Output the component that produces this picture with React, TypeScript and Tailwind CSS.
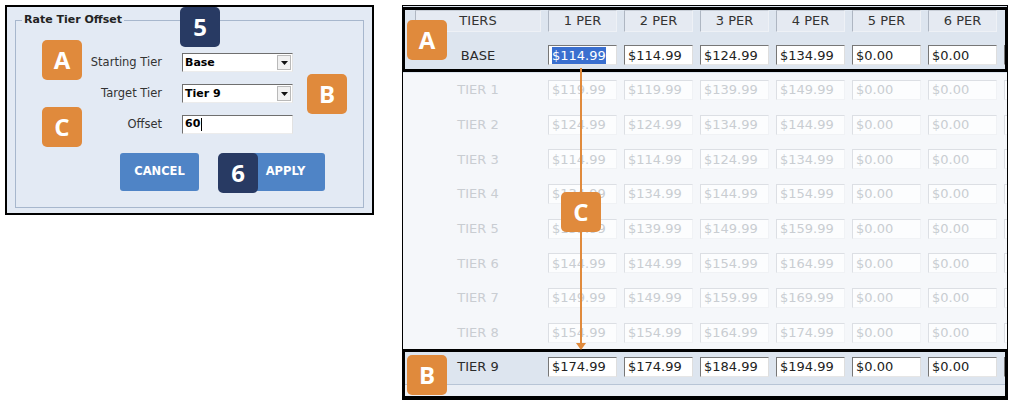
import React from "react";

const tiers = [
  { label: "BASE", vals: ["$114.99", "$114.99", "$124.99", "$134.99", "$0.00", "$0.00"], on: true },
  { label: "TIER 1", vals: ["$119.99", "$119.99", "$139.99", "$149.99", "$0.00", "$0.00"] },
  { label: "TIER 2", vals: ["$124.99", "$124.99", "$134.99", "$144.99", "$0.00", "$0.00"] },
  { label: "TIER 3", vals: ["$114.99", "$114.99", "$124.99", "$134.99", "$0.00", "$0.00"] },
  { label: "TIER 4", vals: ["$134.99", "$134.99", "$144.99", "$154.99", "$0.00", "$0.00"] },
  { label: "TIER 5", vals: ["$139.99", "$139.99", "$149.99", "$159.99", "$0.00", "$0.00"] },
  { label: "TIER 6", vals: ["$144.99", "$144.99", "$154.99", "$164.99", "$0.00", "$0.00"] },
  { label: "TIER 7", vals: ["$149.99", "$149.99", "$159.99", "$169.99", "$0.00", "$0.00"] },
  { label: "TIER 8", vals: ["$154.99", "$154.99", "$164.99", "$174.99", "$0.00", "$0.00"] },
  { label: "TIER 9", vals: ["$174.99", "$174.99", "$184.99", "$194.99", "$0.00", "$0.00"], on: true },
];

const heads = ["1 PER", "2 PER", "3 PER", "4 PER", "5 PER", "6 PER"];

function Badge({ text, dark, className }: { text: string; dark?: boolean; className: string }) {
  return (
    <div
      className={`absolute w-[40px] h-[40px] rounded-[5px] flex items-center justify-center text-white text-[24px] font-bold font-['Open_Sans',sans-serif] ${
        dark ? "bg-[#283a63]" : "bg-[#e08a3c]"
      } ${className}`}
    >
      {text}
    </div>
  );
}

function Select({ value }: { value: string }) {
  return (
    <div className="h-[19px] w-[111px] bg-white border border-t-[#6f6f6f] border-l-[#6f6f6f] border-r-[#e2e2e2] border-b-[#ececec] flex items-center">
      <span className="flex-1 pl-[2px] text-[11px] font-bold text-black leading-none">{value}</span>
      <span className="w-[14px] h-[15px] mr-[1px] bg-[#f1f1f1] border border-[#b9b9b9] flex items-center justify-center">
        <svg width="7" height="4" viewBox="0 0 7 4">
          <path d="M0 0h7L3.5 4z" fill="#111" />
        </svg>
      </span>
    </div>
  );
}

function Cell({ v, on, sel }: { v: string; on?: boolean; sel?: boolean }) {
  return (
    <div
      className={`w-[69px] h-[20px] shrink-0 flex items-center pl-[3px] text-[13px] leading-none border ${
        on
          ? "bg-white text-[#222] border-t-[#777] border-l-[#777] border-r-[#dedede] border-b-[#e6e6e6]"
          : "bg-[#fcfdfe] text-[#c9cdd2] border-t-[#dcdfe4] border-l-[#dcdfe4] border-r-[#f0f2f5] border-b-[#f0f2f5]"
      }`}
    >
      {sel ? <span className="bg-[#3a6fcf] text-white py-[2px]">{v}</span> : v}
    </div>
  );
}

export default function App() {
  return (
    <div className="relative w-[1011px] h-[404px] bg-white overflow-hidden flex items-start font-['DejaVu_Sans',sans-serif]">
      {/* Rate tier offset dialog */}
      <div className="ml-[5px] mt-[5px] w-[369px] h-[210px] border-2 border-black bg-[#e3eaf4] pl-[8px] pt-[6px]">
        <fieldset className="w-[349px] h-[195px] border border-[#a7b7cd]">
          <legend className="ml-[6px] px-[2px] text-[11px] font-bold leading-[14px] text-[#222]">Rate Tier Offset</legend>
          <div className="grid grid-cols-[146px_111px] gap-x-[20px] gap-y-[12px] items-center mt-[26px] text-[11.5px] text-[#333]">
            <span className="text-right">Starting Tier</span>
            <Select value="Base" />
            <span className="text-right">Target Tier</span>
            <Select value="Tier 9" />
            <span className="text-right">Offset</span>
            <div className="h-[19px] w-[111px] bg-white border border-t-[#6f6f6f] border-l-[#6f6f6f] border-r-[#e2e2e2] border-b-[#ececec] flex items-center pl-[2px] text-[11px] font-bold text-black">
              60<span className="w-px h-[13px] bg-black ml-[1px]" />
            </div>
          </div>
          <div className="flex gap-[47px] ml-[104px] mt-[19px]">
            <button className="w-[79px] h-[38px] rounded-[3px] bg-[#4f84c6] text-white text-[11.5px] font-bold">CANCEL</button>
            <button className="w-[79px] h-[38px] rounded-[3px] bg-[#4f84c6] text-white text-[11.5px] font-bold">APPLY</button>
          </div>
        </fieldset>
      </div>

      {/* Tier grid */}
      <div className="ml-[28px] mt-[5px] w-[606px] h-[395px] border border-black bg-[#f5f7fa] overflow-hidden flex flex-col">
        <div className="h-[32px] shrink-0 bg-[#dde5ef] flex gap-[7px] pl-[12px] pt-[4px]">
          <div className="w-[126px] h-[22px] shrink-0 flex items-center justify-center text-[13px] text-[#333] bg-[#e5eaf2] border border-t-[#c8ced7] border-l-[#aeb6c2] border-r-[#eef1f6] border-b-[#eef1f6]">
            TIERS
          </div>
          {heads.map((h) => (
            <div
              key={h}
              className="w-[69px] h-[22px] shrink-0 flex items-center justify-center text-[13px] text-[#333] bg-[#e5eaf2] border border-t-[#c8ced7] border-l-[#aeb6c2] border-r-[#eef1f6] border-b-[#eef1f6]"
            >
              {h}
            </div>
          ))}
        </div>
        {tiers.map((t, i) => (
          <div
            key={t.label}
            className={`h-[34.67px] shrink-0 flex items-center gap-[7px] pl-[12px] ${
              t.on ? "bg-[#dde5ef]" : ""
            } ${i === 9 ? "border-b border-[#b8c5d6]" : ""}`}
          >
            <div className={`w-[126px] shrink-0 text-center text-[13px] ${t.on ? "text-[#2b2b2b]" : "text-[#c9cdd2]"}`}>
              {t.label}
            </div>
            {t.vals.map((v, j) => (
              <Cell key={j} v={v} on={t.on} sel={i === 0 && j === 0} />
            ))}
            <Cell v="" on={t.on} />
          </div>
        ))}
        <div className="flex-1 bg-[#ebeff5]" />
      </div>

      {/* Annotations */}
      <div className="absolute left-[402px] top-[7px] w-[606px] h-[65px] border-[3px] border-black" />
      <div className="absolute left-[402px] top-[349px] w-[606px] h-[50px] border-[3px] border-black" />
      <svg className="absolute left-[575px] top-[68px]" width="12" height="283" viewBox="0 0 12 283">
        <line x1="6" y1="0" x2="6" y2="276" stroke="#e08a3c" strokeWidth="2" />
        <path d="M1 275h10l-5 7z" fill="#e08a3c" />
      </svg>
      <Badge text="5" dark className="left-[180px] top-[7px]" />
      <Badge text="A" className="left-[42px] top-[40px]" />
      <Badge text="B" className="left-[307px] top-[74px]" />
      <Badge text="C" className="left-[42px] top-[107px]" />
      <Badge text="6" dark className="left-[218px] top-[153px]" />
      <Badge text="A" className="left-[407px] top-[20px]" />
      <Badge text="C" className="left-[561px] top-[192px]" />
      <Badge text="B" className="left-[407px] top-[355px]" />
    </div>
  );
}
